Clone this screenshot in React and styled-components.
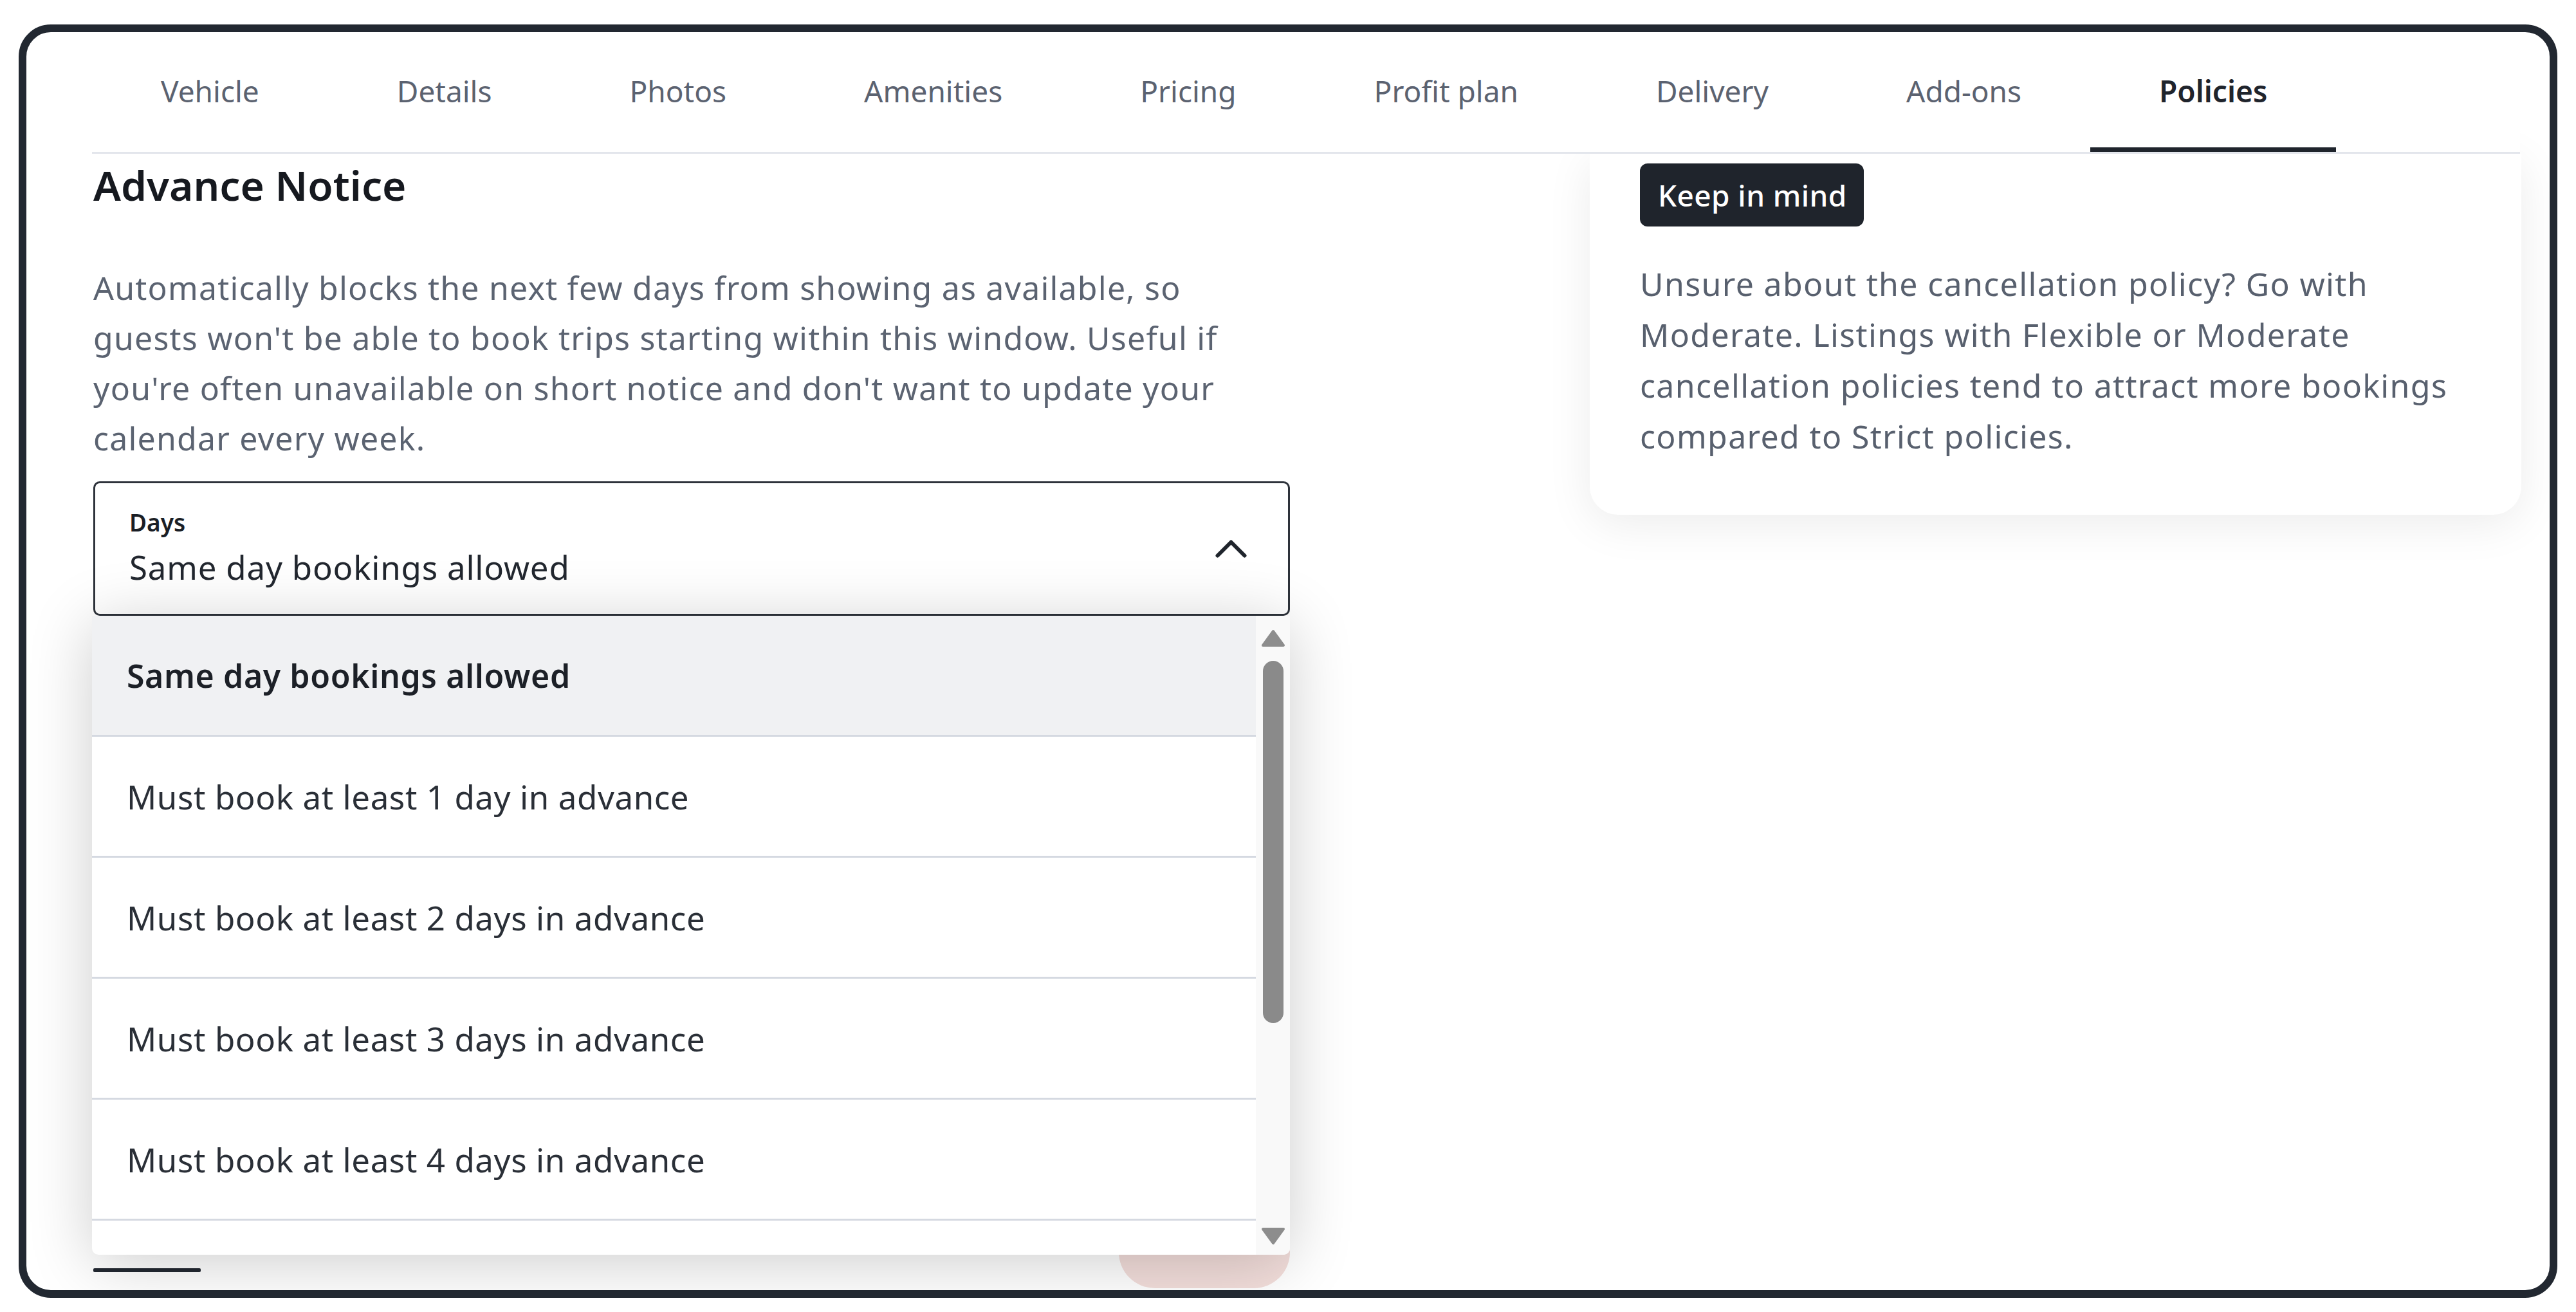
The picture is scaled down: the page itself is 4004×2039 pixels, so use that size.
import React from "react";
import styled, { createGlobalStyle } from "styled-components";

const GlobalStyle = createGlobalStyle`
  html, body { margin: 0; padding: 0; background: #ffffff; }
  body { font-family: "Noto Sans", "Open Sans", sans-serif; }
  * { box-sizing: border-box; }
`;

const Page = styled.div`
  padding: 38px 29px 0 29px;
`;

const Frame = styled.div`
  width: 3946px;
  height: 1979px;
  border: 12px solid #222831;
  border-radius: 50px;
  overflow: hidden;
  background: #ffffff;
  padding: 0 46px 0 102px;
`;

const TabBar = styled.nav`
  position: relative;
  z-index: 2;
  display: flex;
  height: 189px;
  background: #ffffff;
  border-bottom: 3px solid #e3e6ec;
`;

const Tab = styled.div`
  display: flex;
  align-items: center;
  padding: 3px 107px 0;
  font-size: 46px;
  font-weight: ${(p) => (p.$active ? 600 : 400)};
  color: ${(p) => (p.$active ? "#1f242c" : "#5b6270")};
  border-bottom: 7px solid ${(p) => (p.$active ? "#1f242c" : "transparent")};
  white-space: nowrap;
`;

const Body = styled.div`
  display: grid;
  grid-template-columns: 1862px 1448px;
  column-gap: 466px;
  align-items: start;
`;

const LeftCol = styled.section`
  position: relative;
  padding-left: 2px;
`;

const Heading = styled.h2`
  margin: 9px 0 0;
  font-size: 64px;
  line-height: 80px;
  font-weight: 600;
  color: #16191f;
`;

const Lead = styled.p`
  margin: 80px 0 0;
  font-size: 50px;
  letter-spacing: 1.2px;
  line-height: 78px;
  color: #5b6371;
  width: 1860px;
`;

const SelectWrap = styled.div`
  position: relative;
  margin-top: 28px;
  width: 1860px;
`;

const SelectBox = styled.div`
  display: flex;
  align-items: center;
  justify-content: space-between;
  height: 209px;
  border: 3px solid #2e333b;
  border-radius: 10px;
  padding: 0 64px 0 53px;
  background: #ffffff;
`;

const SelectText = styled.div`
  display: flex;
  flex-direction: column;
  gap: 17px;
  padding-bottom: 4px;
`;

const SelectLabel = styled.span`
  font-size: 37px;
  line-height: 44px;
  font-weight: 600;
  color: #1a1e25;
`;

const SelectValue = styled.span`
  font-size: 51px;
  letter-spacing: 0.8px;
  line-height: 60px;
  color: #22272f;
`;

const Menu = styled.div`
  position: absolute;
  z-index: 3;
  top: 100%;
  left: -2px;
  width: 1862px;
  height: 993px;
  display: flex;
  background: #ffffff;
  border-radius: 0 0 10px 10px;
  overflow: hidden;
  box-shadow: 0 12px 100px rgba(0, 0, 0, 0.2);
`;

const Options = styled.ul`
  flex: 1;
  margin: 0;
  padding: 0;
  list-style: none;
  overflow: hidden;
`;

const Option = styled.li`
  display: flex;
  align-items: center;
  height: 188px;
  flex-shrink: 0;
  padding-left: 54px;
  border-bottom: 3px solid #d5d9e1;
  background: ${(p) => (p.$selected ? "#f0f1f3" : "#ffffff")};
  font-size: ${(p) => (p.$selected ? "50px" : "51px")};
  letter-spacing: 0.6px;
  font-weight: ${(p) => (p.$selected ? 600 : 400)};
  color: ${(p) => (p.$selected ? "#1c2027" : "#2a2f37")};
`;

const Scrollbar = styled.div`
  width: 53px;
  display: flex;
  flex-direction: column;
  align-items: center;
  background: #f9f9f9;
  padding: 21px 0 15px;
`;

const Thumb = styled.div`
  width: 32px;
  height: 563px;
  margin-top: 21px;
  border-radius: 16px;
  background: #8a8a8a;
`;

const Spacer = styled.div`
  flex: 1;
`;

const Footer = styled.div`
  display: flex;
  justify-content: space-between;
  align-items: flex-start;
  margin-top: 933px;
  width: 1860px;
`;

const Rule = styled.div`
  width: 167px;
  height: 6px;
  margin-top: 81px;
  border-radius: 2px;
  background: #222831;
`;

const PillButton = styled.div`
  width: 266px;
  height: 112px;
  border-radius: 56px;
  background: #f3dedb;
`;

const TipCard = styled.aside`
  position: relative;
  z-index: 1;
  background: #ffffff;
  border-radius: 0 0 44px 44px;
  padding: 15px 60px 82px 78px;
  box-shadow: 0 14px 70px rgba(0, 0, 0, 0.08);
`;

const Badge = styled.span`
  display: inline-flex;
  align-items: center;
  height: 98px;
  padding: 0 26px 0 28px;
  border-radius: 12px;
  background: #1f242c;
  color: #ffffff;
  font-size: 46px;
  letter-spacing: 0.4px;
  font-weight: 500;
`;

const TipText = styled.p`
  margin: 50px 0 0;
  font-size: 50px;
  letter-spacing: 1.35px;
  line-height: 79px;
  color: #58606e;
`;

const Chevron = () => (
  <svg width="49" height="28" viewBox="0 0 49 28" fill="none">
    <polyline
      points="3.5,24.5 24.5,3.5 45.5,24.5"
      stroke="#1f242c"
      strokeWidth="6"
      strokeLinecap="round"
      strokeLinejoin="round"
    />
  </svg>
);

const Arrow = ({ up }) => (
  <svg width="38" height="28" viewBox="0 0 38 28">
    <path
      d={up ? "M19 3 L35 25 L3 25 Z" : "M3 3 L35 3 L19 25 Z"}
      fill="#8d8d8d"
      stroke="#8d8d8d"
      strokeWidth="4"
      strokeLinejoin="round"
    />
  </svg>
);

const tabs = [
  "Vehicle",
  "Details",
  "Photos",
  "Amenities",
  "Pricing",
  "Profit plan",
  "Delivery",
  "Add-ons",
  "Policies",
];

const options = [
  "Same day bookings allowed",
  "Must book at least 1 day in advance",
  "Must book at least 2 days in advance",
  "Must book at least 3 days in advance",
  "Must book at least 4 days in advance",
];

export default function App() {
  return (
    <>
      <GlobalStyle />
      <Page>
        <Frame>
          <TabBar>
            {tabs.map((t) => (
              <Tab key={t} $active={t === "Policies"}>
                {t}
              </Tab>
            ))}
          </TabBar>
          <Body>
            <LeftCol>
              <Heading>Advance Notice</Heading>
              <Lead>
                Automatically blocks the next few days from showing as available, so
                guests won't be able to book trips starting within this window. Useful if
                you're often unavailable on short notice and don't want to update your
                calendar every week.
              </Lead>
              <SelectWrap>
                <SelectBox>
                  <SelectText>
                    <SelectLabel>Days</SelectLabel>
                    <SelectValue>Same day bookings allowed</SelectValue>
                  </SelectText>
                  <Chevron />
                </SelectBox>
                <Menu>
                  <Options>
                    {options.map((o, i) => (
                      <Option key={o} $selected={i === 0}>
                        {o}
                      </Option>
                    ))}
                  </Options>
                  <Scrollbar>
                    <Arrow up />
                    <Thumb />
                    <Spacer />
                    <Arrow />
                  </Scrollbar>
                </Menu>
              </SelectWrap>
              <Footer>
                <Rule />
                <PillButton />
              </Footer>
            </LeftCol>
            <TipCard>
              <Badge>Keep in mind</Badge>
              <TipText>
                Unsure about the cancellation policy? Go with Moderate. Listings with
                Flexible or Moderate cancellation policies tend to attract more bookings
                compared to Strict policies.
              </TipText>
            </TipCard>
          </Body>
        </Frame>
      </Page>
    </>
  );
}
